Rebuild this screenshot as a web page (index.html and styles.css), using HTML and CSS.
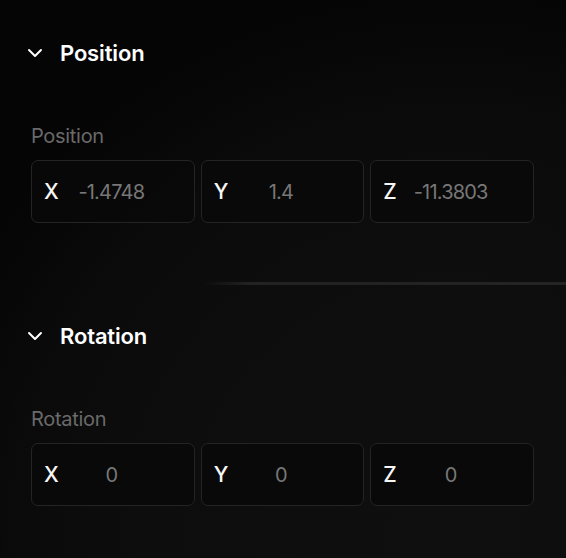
FILE: index.html
```html
<!DOCTYPE html>
<html lang="en">
<head>
<meta charset="utf-8">
<title>Transform</title>
<link rel="stylesheet" href="styles.css">
</head>
<body>
<div class="panel">
  <section class="section">
    <div class="section-head">
      <svg class="chev" width="16" height="16" viewBox="0 0 16 16"><polyline points="2,5 8,11 14,5" fill="none" stroke="#fff" stroke-width="2" stroke-linecap="round" stroke-linejoin="round"/></svg>
      <h2 class="section-title">Position</h2>
    </div>
    <div class="field-label">Position</div>
    <div class="vec">
      <div class="vec-box"><span class="axis">X</span><span class="val">-1.4748</span></div>
      <div class="vec-box"><span class="axis">Y</span><span class="val">1.4</span></div>
      <div class="vec-box"><span class="axis">Z</span><span class="val">-11.3803</span></div>
    </div>
  </section>
  <div class="divider"></div>
  <section class="section second">
    <div class="section-head">
      <svg class="chev" width="16" height="16" viewBox="0 0 16 16"><polyline points="2,5 8,11 14,5" fill="none" stroke="#fff" stroke-width="2" stroke-linecap="round" stroke-linejoin="round"/></svg>
      <h2 class="section-title">Rotation</h2>
    </div>
    <div class="field-label">Rotation</div>
    <div class="vec">
      <div class="vec-box"><span class="axis">X</span><span class="val">0</span></div>
      <div class="vec-box"><span class="axis">Y</span><span class="val">0</span></div>
      <div class="vec-box"><span class="axis">Z</span><span class="val">0</span></div>
    </div>
  </section>
</div>
</body>
</html>
```
FILE: styles.css
```css
html, body {
  margin: 0;
  padding: 0;
  height: 100%;
}
body {
  background-color: #050505;
  background-image:
    radial-gradient(circle at 80% 98%, #0f0f0f 0%, #0d0d0d 45%, rgba(11,11,11,0.9) 62%, rgba(5,5,5,0) 78%);
  font-family: Inter, "Noto Sans", sans-serif;
  color: #fff;
  overflow: hidden;
}
.panel {
  display: flex;
  flex-direction: column;
}
.section {
  padding: 36px 32px 0 31px;
}
.section.second {
  padding-top: 34px;
}
.section-head {
  display: flex;
  align-items: center;
  height: 34px;
  margin-left: -4px;
  gap: 17px;
}
.chev {
  display: block;
  flex: none;
}
.section-title {
  margin: 0;
  font-size: 22px;
  font-weight: 600;
  letter-spacing: -0.15px;
  line-height: 34px;
  color: #fff;
}
.field-label {
  margin-top: 54px;
  height: 24px;
  line-height: 24px;
  font-size: 20px;
  color: #6a6a6a;
  letter-spacing: -0.3px;
}
.vec {
  margin-top: 12px;
  display: grid;
  grid-template-columns: repeat(3, 1fr);
  gap: 6px;
}
.vec-box {
  height: 63px;
  box-sizing: border-box;
  border: 1px solid #242424;
  border-radius: 7px;
  background: rgba(9,9,9,0.9);
  display: flex;
  align-items: center;
  padding: 0 40px 0 12px;
  gap: 11px;
}
.axis {
  width: 14px;
  font-size: 21px;
  font-weight: 500;
  color: #f6f6f6;
}
.val {
  flex: 1;
  text-align: center;
  font-size: 20px;
  color: #777;
  letter-spacing: -0.8px;
}
.divider {
  margin-top: 59px;
  height: 3px;
  background: linear-gradient(to right, rgba(36,36,36,0) 36%, #222 44%, #242424 100%);
}
```
